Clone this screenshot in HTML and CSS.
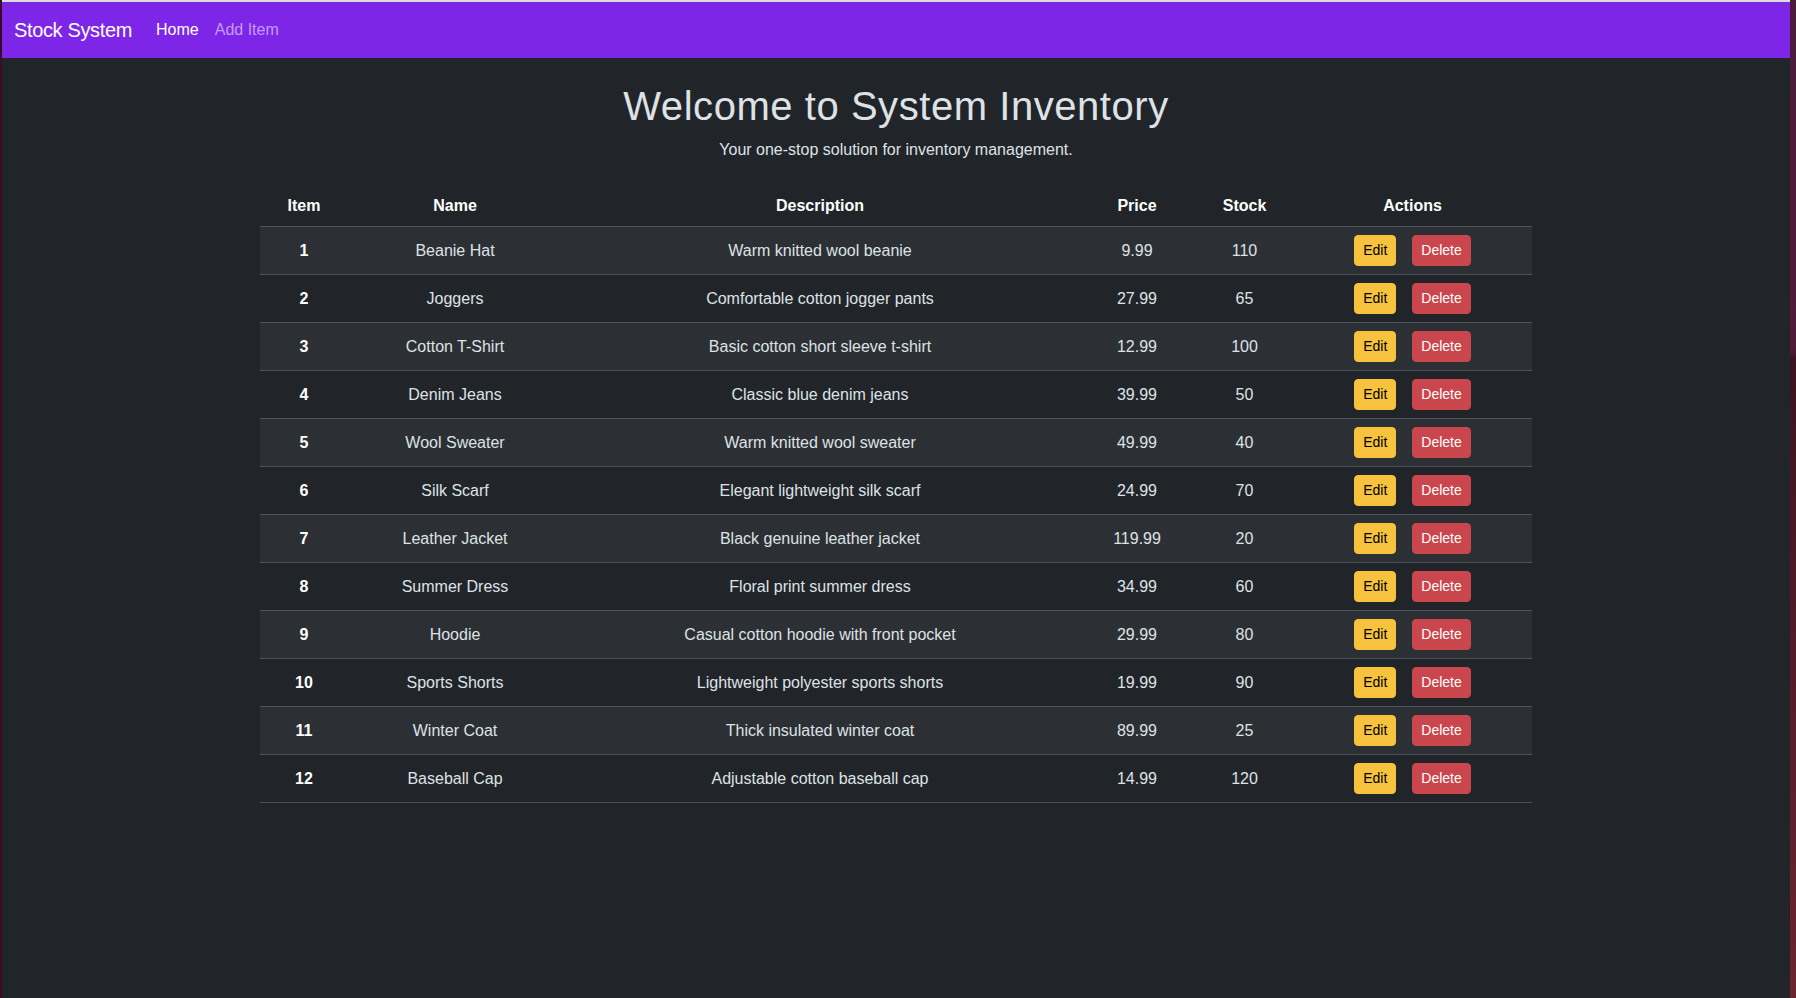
FILE: index.html
```html
<!DOCTYPE html>
<html lang="en">
<head>
<meta charset="utf-8">
<title>Stock System</title>
<link rel="stylesheet" href="styles.css">
</head>
<body>
<div class="edge-left"></div>
<div class="window">
  <nav class="navbar">
    <span class="brand">Stock System</span>
    <a class="nav-link active" href="#">Home</a>
    <a class="nav-link" href="#">Add Item</a>
  </nav>
  <main class="main">
    <h1 class="title">Welcome to System Inventory</h1>
    <p class="subtitle">Your one-stop solution for inventory management.</p>
    <table class="inv">
      <colgroup>
        <col class="c-item"><col class="c-name"><col class="c-desc"><col class="c-price"><col class="c-stock"><col class="c-act">
      </colgroup>
      <thead>
        <tr><th>Item</th><th>Name</th><th>Description</th><th>Price</th><th>Stock</th><th>Actions</th></tr>
      </thead>
      <tbody>
        <tr><th>1</th><td>Beanie Hat</td><td>Warm knitted wool beanie</td><td>9.99</td><td>110</td><td><div class="acts"><button class="btn edit">Edit</button><button class="btn del">Delete</button></div></td></tr>
        <tr><th>2</th><td>Joggers</td><td>Comfortable cotton jogger pants</td><td>27.99</td><td>65</td><td><div class="acts"><button class="btn edit">Edit</button><button class="btn del">Delete</button></div></td></tr>
        <tr><th>3</th><td>Cotton T-Shirt</td><td>Basic cotton short sleeve t-shirt</td><td>12.99</td><td>100</td><td><div class="acts"><button class="btn edit">Edit</button><button class="btn del">Delete</button></div></td></tr>
        <tr><th>4</th><td>Denim Jeans</td><td>Classic blue denim jeans</td><td>39.99</td><td>50</td><td><div class="acts"><button class="btn edit">Edit</button><button class="btn del">Delete</button></div></td></tr>
        <tr><th>5</th><td>Wool Sweater</td><td>Warm knitted wool sweater</td><td>49.99</td><td>40</td><td><div class="acts"><button class="btn edit">Edit</button><button class="btn del">Delete</button></div></td></tr>
        <tr><th>6</th><td>Silk Scarf</td><td>Elegant lightweight silk scarf</td><td>24.99</td><td>70</td><td><div class="acts"><button class="btn edit">Edit</button><button class="btn del">Delete</button></div></td></tr>
        <tr><th>7</th><td>Leather Jacket</td><td>Black genuine leather jacket</td><td>119.99</td><td>20</td><td><div class="acts"><button class="btn edit">Edit</button><button class="btn del">Delete</button></div></td></tr>
        <tr><th>8</th><td>Summer Dress</td><td>Floral print summer dress</td><td>34.99</td><td>60</td><td><div class="acts"><button class="btn edit">Edit</button><button class="btn del">Delete</button></div></td></tr>
        <tr><th>9</th><td>Hoodie</td><td>Casual cotton hoodie with front pocket</td><td>29.99</td><td>80</td><td><div class="acts"><button class="btn edit">Edit</button><button class="btn del">Delete</button></div></td></tr>
        <tr><th>10</th><td>Sports Shorts</td><td>Lightweight polyester sports shorts</td><td>19.99</td><td>90</td><td><div class="acts"><button class="btn edit">Edit</button><button class="btn del">Delete</button></div></td></tr>
        <tr><th>11</th><td>Winter Coat</td><td>Thick insulated winter coat</td><td>89.99</td><td>25</td><td><div class="acts"><button class="btn edit">Edit</button><button class="btn del">Delete</button></div></td></tr>
        <tr><th>12</th><td>Baseball Cap</td><td>Adjustable cotton baseball cap</td><td>14.99</td><td>120</td><td><div class="acts"><button class="btn edit">Edit</button><button class="btn del">Delete</button></div></td></tr>
      </tbody>
    </table>
  </main>
</div>
</body>
</html>
```

FILE: styles.css
```css
html, body {
  margin: 0;
  height: 100%;
}
body {
  display: flex;
  background: linear-gradient(to bottom, #4a1b3b 0%, #4f1c38 35%, #3a1420 36%, #4e1a28 60%, #6a2530 100%);
  font-family: "Liberation Sans", Arial, sans-serif;
  overflow: hidden;
}
.edge-left {
  width: 2px;
  flex: none;
  background: #3a0b26;
}
.window {
  flex: none;
  width: 1788px;
  height: 996px;
  border-top: 2px solid #dcdcdc;
  background: #212529;
  color: #dee2e6;
  display: flex;
  flex-direction: column;
}
.navbar {
  height: 56px;
  box-sizing: border-box;
  padding: 8px 12px;
  background: #7e26e7;
  display: flex;
  align-items: center;
}
.brand {
  font-size: 20px;
  line-height: 30px;
  padding: 5px 0;
  margin-right: 16px;
  color: #ffffff;
  letter-spacing: -0.35px;
}
.nav-link {
  font-size: 16px;
  line-height: 24px;
  padding: 8px;
  color: rgba(255, 255, 255, 0.55);
  text-decoration: none;
}
.nav-link.active {
  color: #ffffff;
}
.main {
  display: flex;
  flex-direction: column;
  align-items: center;
}
.title {
  margin: 24px 0 8px;
  font-size: 40px;
  line-height: 48px;
  font-weight: 500;
  color: #dee2e6;
  letter-spacing: 0.55px;
}
.subtitle {
  margin: 0 0 24px;
  font-size: 16px;
  line-height: 24px;
  color: #dee2e6;
}
.inv {
  width: 1272px;
  table-layout: fixed;
  border-collapse: separate;
  border-spacing: 0;
  font-size: 16px;
  line-height: 24px;
}
.c-item { width: 88px; }
.c-name { width: 214px; }
.c-desc { width: 516px; }
.c-price { width: 118px; }
.c-stock { width: 97px; }
.c-act { width: 239px; }
.inv th, .inv td {
  padding: 8px;
  text-align: center;
  vertical-align: middle;
  border-bottom: 1px solid #4d5154;
  color: #dee2e6;
}
.inv th {
  font-weight: bold;
  color: #ffffff;
}
.inv tbody tr:nth-child(odd) th,
.inv tbody tr:nth-child(odd) td {
  background: #2c3034;
}
.acts {
  display: flex;
  justify-content: center;
  gap: 16px;
}
.btn {
  font-family: "Liberation Sans", Arial, sans-serif;
  font-size: 14px;
  line-height: 21px;
  padding: 4px 8px;
  border-radius: 4px;
  border: 1px solid transparent;
  cursor: pointer;
}
.btn.edit {
  background: #f7c33e;
  border-color: #f7c33e;
  color: #000000;
}
.btn.del {
  background: #c9464c;
  border-color: #c9464c;
  color: #ffffff;
}
```
